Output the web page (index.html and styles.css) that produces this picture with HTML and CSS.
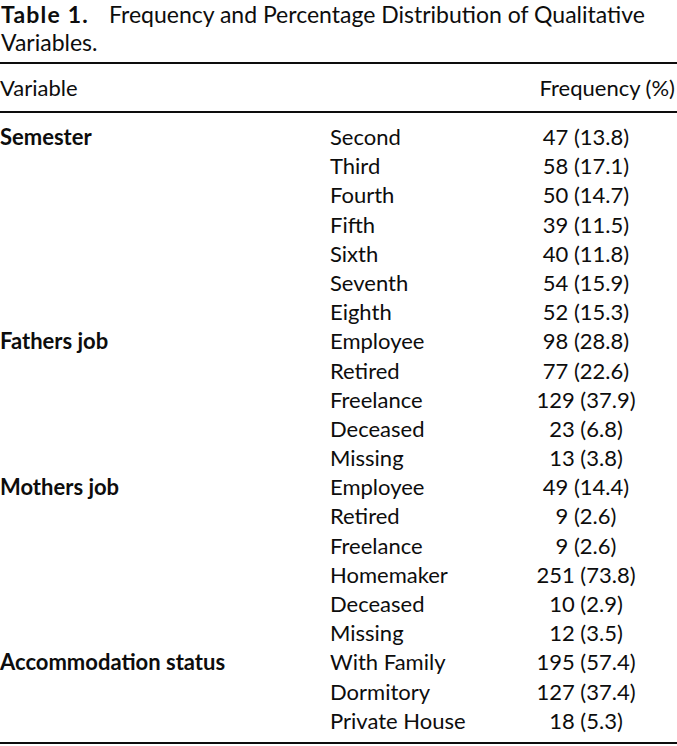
FILE: index.html
```html
<!DOCTYPE html>
<html lang="en">
<head>
<meta charset="utf-8">
<title>Table 1</title>
<link rel="stylesheet" href="styles.css">
</head>
<body>
<p class="caption"><span class="label">Table 1.</span>Frequency and Percentage Distribution of Qualitative Variables.</p>
<div class="table">
  <div class="head">
    <span>Variable</span>
    <span class="freq-h">Frequency (%)</span>
  </div>
  <div class="body">
    <span class="group">Semester</span><span>Second</span><span class="num">47 (13.8)</span>
    <span></span><span>Third</span><span class="num">58 (17.1)</span>
    <span></span><span>Fourth</span><span class="num">50 (14.7)</span>
    <span></span><span>Fifth</span><span class="num">39 (11.5)</span>
    <span></span><span>Sixth</span><span class="num">40 (11.8)</span>
    <span></span><span>Seventh</span><span class="num">54 (15.9)</span>
    <span></span><span>Eighth</span><span class="num">52 (15.3)</span>
    <span class="group">Fathers job</span><span>Employee</span><span class="num">98 (28.8)</span>
    <span></span><span>Retired</span><span class="num">77 (22.6)</span>
    <span></span><span>Freelance</span><span class="num">129 (37.9)</span>
    <span></span><span>Deceased</span><span class="num">23 (6.8)</span>
    <span></span><span>Missing</span><span class="num">13 (3.8)</span>
    <span class="group">Mothers job</span><span>Employee</span><span class="num">49 (14.4)</span>
    <span></span><span>Retired</span><span class="num">9 (2.6)</span>
    <span></span><span>Freelance</span><span class="num">9 (2.6)</span>
    <span></span><span>Homemaker</span><span class="num">251 (73.8)</span>
    <span></span><span>Deceased</span><span class="num">10 (2.9)</span>
    <span></span><span>Missing</span><span class="num">12 (3.5)</span>
    <span class="group">Accommodation status</span><span>With Family</span><span class="num">195 (57.4)</span>
    <span></span><span>Dormitory</span><span class="num">127 (37.4)</span>
    <span></span><span>Private House</span><span class="num">18 (5.3)</span>
  </div>
</div>
</body>
</html>
```

FILE: styles.css
```css
html, body {
  margin: 0;
  padding: 0;
  background: #fff;
}
body {
  font-family: Lato, "Open Sans", "Liberation Sans", sans-serif;
  color: #0d0d0d;
  width: 677px;
}
.caption {
  margin: 0 0 6px 1px;
  font-size: 23px;
  line-height: 28px;
}
.caption .label {
  font-weight: 700;
  letter-spacing: 1.2px;
  margin-right: 20px;
}
.table {
  border-top: 2px solid #0d0d0d;
  border-bottom: 2px solid #0d0d0d;
  font-size: 22px;
}
.head {
  display: flex;
  justify-content: space-between;
  height: 47px;
  line-height: 47px;
  border-bottom: 2px solid #0d0d0d;
  padding-right: 2px;
}
.body {
  display: grid;
  grid-template-columns: 330px 167px 178px;
  grid-auto-rows: 29.2px;
  line-height: 29.2px;
  padding: 9px 0 7px;
}
.group {
  font-weight: 700;
}
.num {
  text-align: center;
}
```
